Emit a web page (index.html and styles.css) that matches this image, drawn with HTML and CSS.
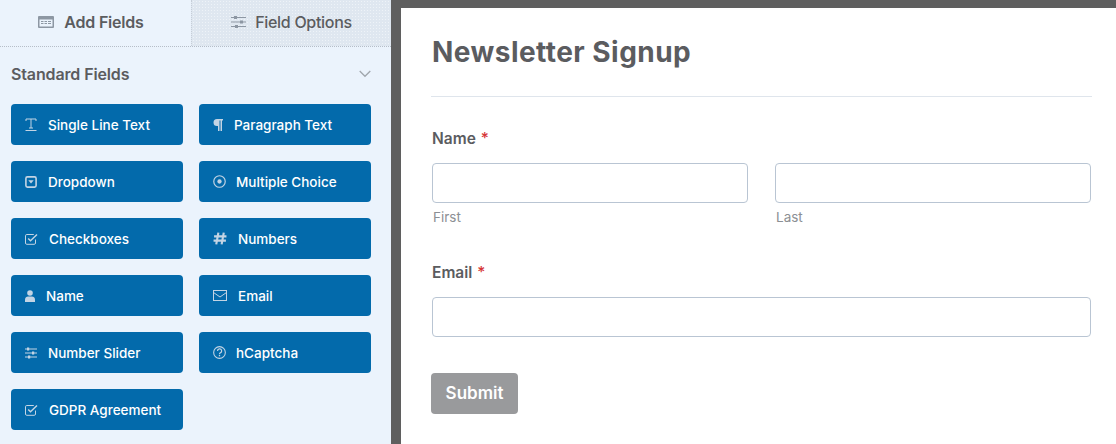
FILE: index.html
```html
<!DOCTYPE html>
<html lang="en">
<head>
    <meta charset="UTF-8">
    <title>Newsletter Signup</title>
    <link rel="stylesheet" href="styles.css">
</head>
<body>
    <div class="builder">
        <aside class="sidebar">
            <div class="tabs">
                <div class="tab active">
                    <svg class="tab-icon" width="16" height="12" viewBox="0 0 16 12"><path fill="#8d97a3" d="M1 0h14a1 1 0 0 1 1 1v10a1 1 0 0 1-1 1H1a1 1 0 0 1-1-1V1a1 1 0 0 1 1-1zm.5 3.500v7h13v-7h-13z"/><path fill="#8d97a3" d="M3 5h2.500v1H3zM6.500 5h2.500v1H6.500zM10 5h3v1h-3zM3 7h2.500v1H3zM6.500 7h2.500v1H6.500zM10 7h3v1h-3z"/></svg>
                    <span>Add Fields</span>
                </div>
                <div class="tab inactive">
                    <svg class="tab-icon" width="15" height="14" viewBox="0 0 15 14"><path fill="none" stroke="#8d97a3" stroke-width="1" d="M0 2.500h15M0 7h15M0 11.500h15"/><path fill="#8d97a3" d="M3 1h3v3H3zM9 5.500h3v3H9zM4 10h3v3H4z"/></svg>
                    <span>Field Options</span>
                </div>
            </div>

            <div class="section-head">
                <span>Standard Fields</span>
                <svg width="12" height="8" viewBox="0 0 12 8"><path fill="none" stroke="#a0a6ad" stroke-width="1.300" d="M.7 1l5.300 5.300L11.300 1"/></svg>
            </div>

            <div class="field-grid">
                <button class="field-btn">
                    <svg class="field-icon" width="12" height="14" viewBox="0 0 12 14"><path fill="none" stroke="#c3d4e4" stroke-width="1" d="M1 3V1h10v2M6 1v9M4 10h4M.5 12.500h11"/></svg>
                    <span>Single Line Text</span>
                </button>
                <button class="field-btn">
                    <svg class="field-icon" width="10" height="12" viewBox="0 0 10 12"><path fill="#c3d4e4" d="M4 0h6v1.500H9V12H7.500V1.500h-1V12H5V7H4a3.500 3.500 0 0 1 0-7z"/></svg>
                    <span>Paragraph Text</span>
                </button>
                <button class="field-btn">
                    <svg class="field-icon" width="12" height="12" viewBox="0 0 12 12"><rect x=".9" y=".9" width="10.200" height="10.200" rx="1.500" fill="none" stroke="#c3d4e4" stroke-width="1.600"/><path fill="#c3d4e4" d="M3.300 4.300h5.400L6 7.600z"/></svg>
                    <span>Dropdown</span>
                </button>
                <button class="field-btn">
                    <svg class="field-icon round" width="13" height="13" viewBox="0 0 12 12"><circle cx="6" cy="6" r="5.300" fill="none" stroke="#c3d4e4" stroke-width="1.100"/><circle cx="6" cy="6" r="2" fill="#c3d4e4"/></svg>
                    <span>Multiple Choice</span>
                </button>
                <button class="field-btn">
                    <svg class="field-icon" width="13" height="12" viewBox="0 0 13 12"><path fill="none" stroke="#c3d4e4" stroke-width="1" d="M10.500 6.500v3.500a1.300 1.300 0 0 1-1.300 1.300H1.800A1.300 1.300 0 0 1 .5 10V2.800a1.300 1.300 0 0 1 1.300-1.300h7"/><path fill="none" stroke="#c3d4e4" stroke-width="1.500" d="M3.200 5.500l2.300 2.300 6.500-6.300"/></svg>
                    <span>Checkboxes</span>
                </button>
                <button class="field-btn">
                    <svg class="field-icon" width="14" height="13" viewBox="0 0 13 12"><path fill="none" stroke="#c3d4e4" stroke-width="2" d="M5 .5L3 11.500M10 .5L8 11.500M1 4h11.500M.5 8h11.500"/></svg>
                    <span>Numbers</span>
                </button>
                <button class="field-btn">
                    <svg class="field-icon" width="10" height="12" viewBox="0 0 10 12"><circle cx="5" cy="3" r="2.800" fill="#c3d4e4"/><path fill="#c3d4e4" d="M0 12v-2.500C0 7.500 1.500 6.500 3 6.500h4c1.500 0 3 1 3 3V12z"/></svg>
                    <span>Name</span>
                </button>
                <button class="field-btn">
                    <svg class="field-icon" width="14" height="11" viewBox="0 0 14 11"><rect x=".5" y=".5" width="13" height="10" fill="none" stroke="#c3d4e4" stroke-width="1"/><path fill="none" stroke="#c3d4e4" stroke-width="1" d="M.5 2.500L7 7l6.500-4.500"/></svg>
                    <span>Email</span>
                </button>
                <button class="field-btn">
                    <svg class="field-icon" width="12" height="12" viewBox="0 0 12 12"><path fill="none" stroke="#c3d4e4" stroke-width="1" d="M0 2h12M0 6h12M0 10h12"/><path fill="#c3d4e4" d="M2 .6h2.200v2.800H2zM7 4.600h2.200v2.800H7zM3 8.600h2.200v2.800H3z"/></svg>
                    <span>Number Slider</span>
                </button>
                <button class="field-btn">
                    <svg class="field-icon round" width="13" height="13" viewBox="0 0 12 12"><circle cx="6" cy="6" r="5.400" fill="none" stroke="#c3d4e4" stroke-width="1"/><path fill="none" stroke="#c3d4e4" stroke-width="1.100" d="M4.200 4.600A1.900 1.900 0 1 1 6.800 6.300c-.6.300-.8.600-.8 1.200"/><path fill="#c3d4e4" d="M5.400 8.300h1.200v1.200H5.400z"/></svg>
                    <span>hCaptcha</span>
                </button>
                <button class="field-btn">
                    <svg class="field-icon" width="13" height="12" viewBox="0 0 13 12"><path fill="none" stroke="#c3d4e4" stroke-width="1" d="M10.500 6.500v3.500a1.300 1.300 0 0 1-1.300 1.300H1.800A1.300 1.300 0 0 1 .5 10V2.800a1.300 1.300 0 0 1 1.300-1.300h7"/><path fill="none" stroke="#c3d4e4" stroke-width="1.500" d="M3.200 5.500l2.300 2.300 6.500-6.300"/></svg>
                    <span>GDPR Agreement</span>
                </button>
            </div>
        </aside>

        <main class="preview">
            <h1 class="form-title">Newsletter Signup</h1>

            <div class="form-field name-field">
                <div class="field-label">Name <span class="required">*</span></div>
                <div class="name-row">
                    <div class="name-col">
                        <div class="text-input"></div>
                        <div class="sublabel">First</div>
                    </div>
                    <div class="name-col">
                        <div class="text-input"></div>
                        <div class="sublabel">Last</div>
                    </div>
                </div>
            </div>

            <div class="form-field email-field">
                <div class="field-label">Email <span class="required">*</span></div>
                <div class="text-input"></div>
            </div>

            <button class="submit-btn">Submit</button>
        </main>
    </div>
</body>
</html>
```

FILE: styles.css
```css
:root {
    --panel: #ebf3fc;
    --blue: #036aab;
    --dark: #5f5f5f;
    --text: #5b5c5f;
    --line: #dfe5ec;
    --input-border: #b9c5d3;
    --font: Inter, "Liberation Sans", sans-serif;
}

* {
    box-sizing: border-box;
    margin: 0;
    padding: 0;
}

html,
body {
    height: 444px;
    overflow: hidden;
}

body {
    background-color: var(--dark);
    font-family: var(--font);
    color: var(--text);
}

.builder {
    display: flex;
    height: 444px;
}

.sidebar {
    width: 391px;
    flex-shrink: 0;
    background-color: var(--panel);
}

.tabs {
    display: flex;
    height: 47px;
    border-bottom: 1px dotted #b6bec8;
}

.tab {
    display: flex;
    align-items: center;
    justify-content: center;
    padding-bottom: 2px;
    font-size: 16px;
    font-weight: 600;
}

.tab.active {
    width: 191px;
    gap: 10px;
    padding-right: 9px;
    letter-spacing: -0.2px;
}

.tab.inactive {
    width: 200px;
    gap: 9px;
    font-weight: 500;
    letter-spacing: -0.3px;
    border-left: 1px dotted #c6ced8;
    background-color: #dfe7f0;
    background-image: radial-gradient(#eef3f8 0.6px, transparent 0.7px);
    background-size: 3px 3px;
}

.section-head {
    display: flex;
    align-items: center;
    justify-content: space-between;
    height: 57px;
    padding: 0 20px 4px 11px;
    font-size: 16px;
    font-weight: 600;
    letter-spacing: -0.13px;
}

.section-head svg {
    margin-top: 1px;
}

.field-grid {
    display: grid;
    grid-template-columns: 172px 172px;
    grid-auto-rows: 41px;
    column-gap: 16px;
    row-gap: 16px;
    padding-left: 11px;
}

.field-btn {
    display: flex;
    align-items: center;
    gap: 11px;
    padding-left: 14px;
    border: none;
    border-radius: 4px;
    background-color: var(--blue);
    color: #fff;
    font-family: var(--font);
    font-size: 13.5px;
    font-weight: 500;
    text-align: left;
}

.field-icon {
    flex-shrink: 0;
}

.field-icon.round {
    margin-right: -1px;
}

.preview {
    flex: 1;
    margin: 8px 0 0 10px;
    padding: 0 25px 0 30px;
    background-color: #fff;
}

.form-title {
    height: 89px;
    padding: 27px 0 0 1px;
    margin-right: -1px;
    border-bottom: 1px solid var(--line);
    font-size: 28px;
    font-weight: 700;
    line-height: 34px;
    letter-spacing: 0.45px;
}

.form-field {
    padding-left: 1px;
}

.name-field {
    margin-top: 32px;
}

.email-field {
    margin-top: 38px;
}

.field-label {
    height: 20px;
    margin-bottom: 14px;
    font-size: 15.5px;
    font-weight: 600;
    line-height: 20px;
}

.required {
    margin-left: 1px;
    color: #d63638;
    font-weight: 500;
}

.name-row {
    display: flex;
    gap: 27px;
}

.name-col {
    flex: 1;
}

.text-input {
    height: 40px;
    background-color: #fff;
    border: 1px solid var(--input-border);
    border-radius: 4px;
}

.sublabel {
    margin-top: 6px;
    padding-left: 1px;
    font-size: 13.5px;
    line-height: 16px;
    color: #8c8f94;
}

.submit-btn {
    display: block;
    width: 87px;
    height: 41px;
    margin-top: 36px;
    padding-bottom: 2px;
    border: none;
    border-radius: 4px;
    background-color: #999a9c;
    color: #fff;
    font-family: var(--font);
    font-size: 17px;
    font-weight: 600;
}
```
